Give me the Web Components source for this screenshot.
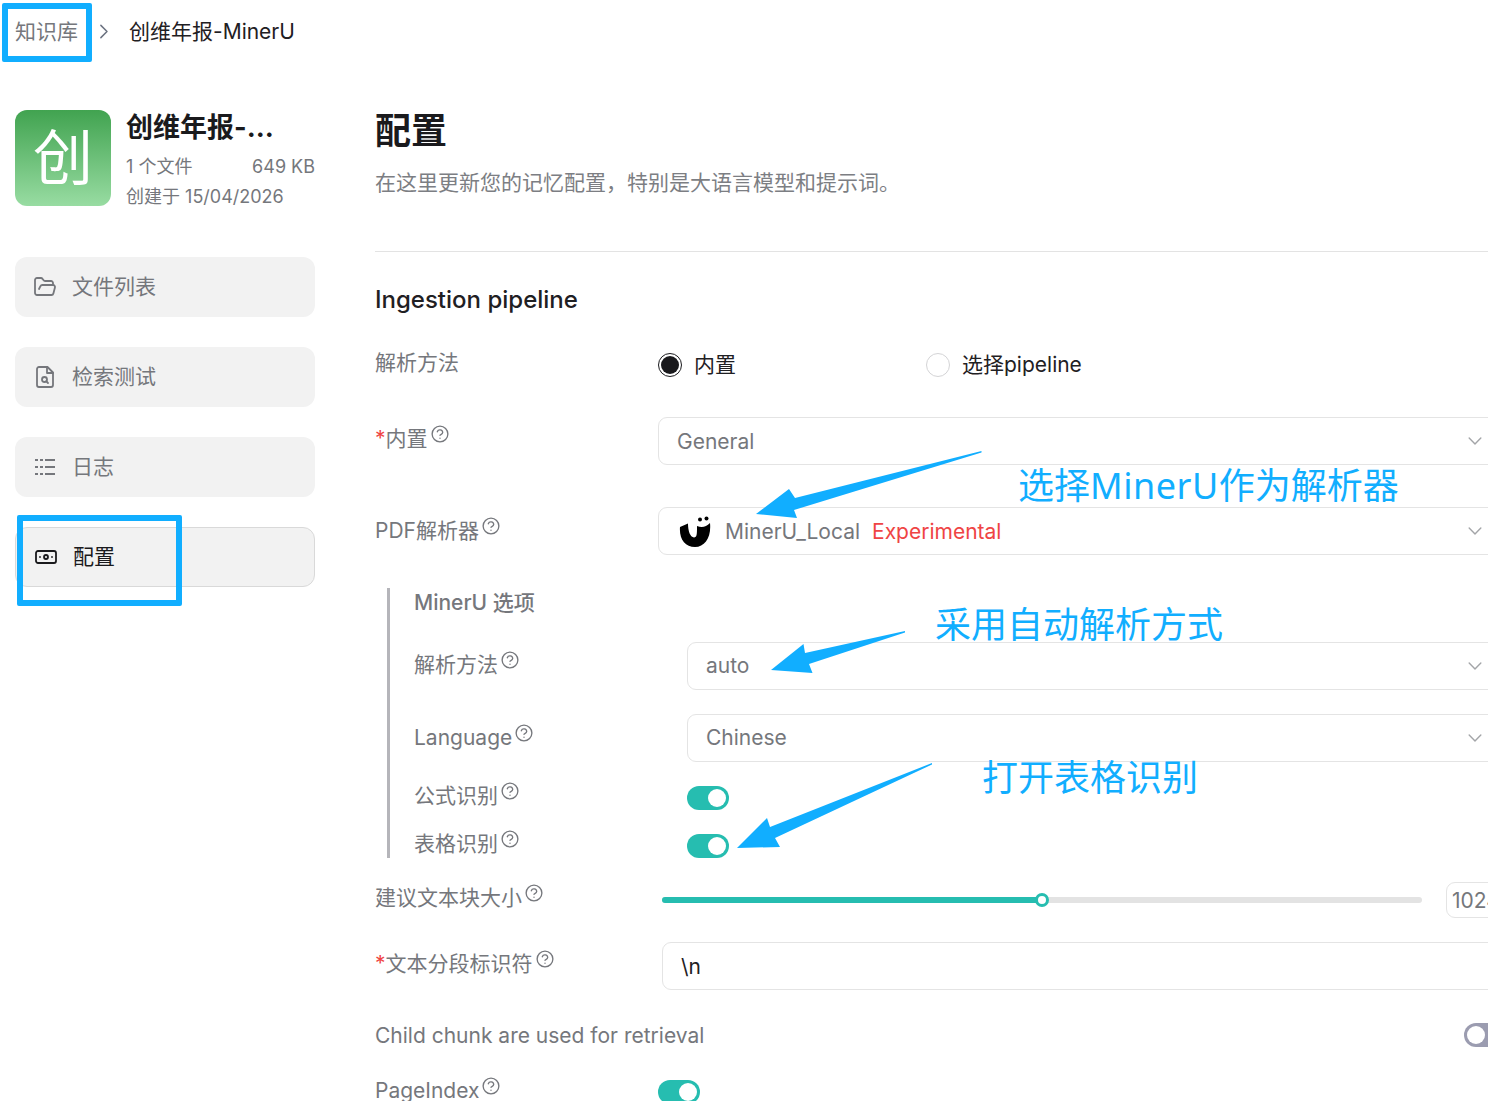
<!DOCTYPE html>
<html lang="zh">
<head>
<meta charset="utf-8">
<title>配置</title>
<style>
  html, body { margin: 0; height: 1101px; overflow: hidden; background: #fff; }
  body { font-family: Inter, "Noto Sans CJK SC", sans-serif; font-size: 21px; color: #75777c; position: relative; }
</style>
</head>
<body>
<kb-breadcrumb></kb-breadcrumb>
<kb-layout>
  <kb-sidebar slot="side"></kb-sidebar>

  <config-form slot="main">
    <form-row style="--row-h:48px;--gap-top:23px;--label-top:6px">
      <span slot="label">解析方法</span>
      <radio-choice checked style="width:268px">内置</radio-choice>
      <radio-choice>选择pipeline</radio-choice>
    </form-row>

    <form-row style="--row-h:48px;--gap-top:28px;--label-top:6px">
      <span slot="label"><req-mark></req-mark>内置<help-icon></help-icon></span>
      <select-box>General</select-box>
    </form-row>

    <form-row style="--row-h:48px;--gap-top:42px;--label-top:8px">
      <span slot="label">PDF解析器<help-icon></help-icon></span>
      <select-box>
        <mineru-logo></mineru-logo>
        <span style="margin-left:14px">MinerU_Local</span>
        <span style="margin-left:12px;color:#ef4444">Experimental</span>
      </select-box>
    </form-row>

    <sub-panel heading="MinerU 选项">
      <form-row style="--row-h:48px;--gap-top:26px;--label-top:7px;--label-w:273px">
        <span slot="label">解析方法<help-icon></help-icon></span>
        <select-box style="--val-shift:2px">auto</select-box>
      </form-row>
      <form-row style="--row-h:48px;--gap-top:24px;--label-top:8px;--label-w:273px">
        <span slot="label">Language<help-icon></help-icon></span>
        <select-box style="--val-shift:2px">Chinese</select-box>
      </form-row>
      <form-row style="--row-h:24px;--gap-top:24px;--label-top:-6px;--label-w:273px">
        <span slot="label">公式识别<help-icon></help-icon></span>
        <toggle-switch on></toggle-switch>
      </form-row>
      <form-row style="--row-h:24px;--gap-top:24px;--label-top:-6px;--label-w:273px">
        <span slot="label">表格识别<help-icon></help-icon></span>
        <toggle-switch on></toggle-switch>
      </form-row>
    </sub-panel>

    <form-row style="--row-h:36px;--gap-top:24px;--label-top:0px;--label-w:287px">
      <span slot="label">建议文本块大小<help-icon></help-icon></span>
      <range-field value="1024" percent="50"></range-field>
    </form-row>

    <form-row style="--row-h:48px;--gap-top:24px;--label-top:6px;--label-w:287px">
      <span slot="label"><req-mark></req-mark>文本分段标识符<help-icon></help-icon></span>
      <select-box plain><span style="color:#1f2023">\n</span></select-box>
    </form-row>

    <form-row style="--row-h:24px;--gap-top:33px;--label-top:-3px;--label-w:1fr;--ctl-w:auto">
      <span slot="label">Child chunk are used for retrieval</span>
      <toggle-switch></toggle-switch>
    </form-row>

    <form-row style="--row-h:24px;--gap-top:33px;--label-top:-5px">
      <span slot="label">PageIndex<help-icon></help-icon></span>
      <toggle-switch on></toggle-switch>
    </form-row>
  </config-form>
</kb-layout>

<note-overlay></note-overlay>

<script>
// Shared base: markup + styles go straight in an open shadow root
class ShadowEl extends HTMLElement {
  constructor() {
    super();
    this.attachShadow({ mode: 'open' });
  }
  render(html) {
    this.shadowRoot.innerHTML = html;
  }
}

const svgIcon = (body, size = 24, color = 'currentColor', sw = 2) =>
  `<svg width="${size}" height="${size}" viewBox="0 0 24 24" fill="none" stroke="${color}" stroke-width="${sw}" stroke-linecap="round" stroke-linejoin="round">${body}</svg>`;

class KbBreadcrumb extends ShadowEl {
  connectedCallback() {
    this.render(`
      <style>
        :host { display: flex; align-items: center; height: 60px; padding-left: 15px; font-size: 21px; color: #75777c; }
        svg { margin: 2px 0 0 15px; }
        .current { margin-left: 15px; color: #1f2023; }
      </style>
      <span>知识库</span>
      ${svgIcon('<path d="m9 5 7 7-7 7"/>', 21, '#6b7280', 1.7)}
      <span class="current">创维年报-MinerU</span>
    `);
  }
}

class KbLayout extends ShadowEl {
  connectedCallback() {
    this.render(`
      <style>
        :host { display: grid; grid-template-columns: 300px 1131px; column-gap: 60px; margin-top: 47px; padding-left: 15px; }
      </style>
      <slot name="side"></slot>
      <slot name="main"></slot>
    `);
  }
}

class KbSidebar extends ShadowEl {
  connectedCallback() {
    this.render(`
      <style>
        :host { display: block; padding-top: 3px; }
        .head { display: flex; gap: 15px; height: 96px; margin-bottom: 51px; }
        .avatar { width: 96px; height: 96px; flex: none; border-radius: 12px; display: flex; align-items: center; justify-content: center;
          background: linear-gradient(180deg, #41a350, #98dca2); color: #fff; font-size: 60px; font-weight: 400; line-height: 1; }
        .info { flex: 1; min-width: 0; color: #75777c; font-size: 18px; line-height: 30px; }
        .name { font-size: 27px; line-height: 36px; font-weight: 700; color: #1a1a1d; margin-bottom: 6px; white-space: nowrap; }
        .meta { display: flex; justify-content: space-between; }
        nav { display: flex; flex-direction: column; gap: 30px; }
      </style>
      <div class="head">
        <div class="avatar">创</div>
        <div class="info">
          <div class="name">创维年报-…</div>
          <div class="meta"><span>1 个文件</span><span>649 KB</span></div>
          <div>创建于 15/04/2026</div>
        </div>
      </div>
      <nav>
        <nav-item icon="folder">文件列表</nav-item>
        <nav-item icon="search">检索测试</nav-item>
        <nav-item icon="list">日志</nav-item>
        <nav-item icon="note" active>配置</nav-item>
      </nav>
    `);
  }
}

const NAV_ICONS = {
  folder: '<path d="m6 14 1.45-2.9A2 2 0 0 1 9.24 10H20a2 2 0 0 1 1.94 2.5l-1.55 6a2 2 0 0 1-1.94 1.5H4a2 2 0 0 1-2-2V5c0-1.1.9-2 2-2h3.93a2 2 0 0 1 1.66.9l.82 1.2a2 2 0 0 0 1.66.9H18a2 2 0 0 1 2 2v2"/>',
  search: '<path d="M14.5 2H6a2 2 0 0 0-2 2v16a2 2 0 0 0 2 2h12a2 2 0 0 0 2-2V7.5L14.5 2z"/><path d="M14 2v6h6"/><circle cx="11.5" cy="14.5" r="2.5"/><path d="M13.25 16.25 15 18"/>',
  list: '<path stroke-linecap="butt" stroke-dasharray="3 2" d="M2 5h8M2 12h8M2 19h8"/><path stroke-linecap="butt" d="M12 5H22M12 12H22M12 19H22"/>',
  note: '<rect x="2" y="6" width="20" height="12" rx="2"/><circle cx="12" cy="12" r="2"/><path d="M6 12h.01M18 12h.01"/>'
};

class NavItem extends ShadowEl {
  connectedCallback() {
    const active = this.hasAttribute('active');
    this.render(`
      <style>
        :host { display: flex; align-items: center; gap: 15px; height: 60px; box-sizing: border-box; padding-left: 18px;
          background: #f2f2f2; border-radius: 12px; font-size: 21px; color: #75777c; }
        :host([active]) { color: #1a1a1d; border: 1px solid #d9d9d9; }
        svg { flex: none; }
        .txt { margin-bottom: 4px; }
      </style>
      ${svgIcon(NAV_ICONS[this.getAttribute('icon')], 24, active ? '#1a1a1d' : '#75777c', 1.8)}
      <span class="txt"><slot></slot></span>
    `);
  }
}

class ConfigForm extends ShadowEl {
  connectedCallback() {
    this.render(`
      <style>
        :host { display: block; }
        h1 { margin: 0; font-size: 36px; line-height: 48px; font-weight: 700; color: #1a1a1d; }
        p { margin: 13px 0 0; font-size: 21px; line-height: 30px; color: #7c7e83; }
        hr { margin: 53px 0 0; border: 0; border-top: 1px solid #e3e3e3; }
        h2 { margin: 30px 0 0; font-size: 24px; line-height: 36px; font-weight: 500; color: #1f2023; }
      </style>
      <h1>配置</h1>
      <p>在这里更新您的记忆配置，特别是大语言模型和提示词。</p>
      <hr>
      <h2>Ingestion pipeline</h2>
      <slot></slot>
    `);
  }
}

class FormRow extends ShadowEl {
  connectedCallback() {
    this.render(`
      <style>
        :host { display: grid; grid-template-columns: var(--label-w, 283px) var(--ctl-w, 1fr); height: var(--row-h, 48px); margin-top: var(--gap-top, 24px); align-items: start; }
        .label { margin-top: var(--label-top, 0); line-height: 30px; font-size: 21px; color: #75777c; white-space: nowrap; position: relative; top: 1px; }
        .control { display: flex; align-items: center; min-width: 0; height: var(--row-h, 48px); }
      </style>
      <div class="label"><slot name="label"></slot></div>
      <div class="control"><slot></slot></div>
    `);
  }
}

class SubPanel extends ShadowEl {
  connectedCallback() {
    this.render(`
      <style>
        :host { display: block; margin: 33px 0 0 12px; padding-left: 24px; border-left: 3px solid #b5b5ba; height: 270px; }
        .title { font-size: 21px; line-height: 28px; font-weight: 500; color: #75777c; position: relative; top: 1px; }
      </style>
      <div class="title">${this.getAttribute('heading')}</div>
      <slot></slot>
    `);
  }
}

class SelectBox extends ShadowEl {
  connectedCallback() {
    const chevron = this.hasAttribute('plain') ? '' :
      `<span class="chev">${svgIcon('<path d="m5 8.5 7 7 7-7"/>', 20, '#a3a5a8', 1.7)}</span>`;
    this.render(`
      <style>
        :host { display: flex; flex: 1; align-items: center; height: 48px; box-sizing: border-box; padding: 0 24px 0 18px;
          border: 1px solid #e4e4e4; border-radius: 9px; font-size: 21px; color: #75777c; background: #fff; white-space: nowrap; }
        .val { display: flex; align-items: center; flex: 1; padding-bottom: var(--val-shift, 0); }
        .chev { display: flex; margin-right: -4px; }
      </style>
      <div class="val"><slot></slot></div>
      ${chevron}
    `);
  }
}

class RadioChoice extends ShadowEl {
  connectedCallback() {
    this.render(`
      <style>
        :host { display: inline-flex; align-items: center; gap: 12px; font-size: 21px; color: #1f2023; flex: none; }
        .dot { width: 24px; height: 24px; box-sizing: border-box; border-radius: 50%; border: 1px solid #d4d4d6; flex: none; background: #fff; }
        :host([checked]) .dot { border: 1.5px solid #1a1a1d; padding: 2px; background: #1a1a1d content-box; }
        .txt { margin-bottom: 4px; }
      </style>
      <span class="dot"></span><span class="txt"><slot></slot></span>
    `);
  }
}

class ToggleSwitch extends ShadowEl {
  connectedCallback() {
    this.render(`
      <style>
        :host { display: flex; align-items: center; justify-content: flex-start; width: 42px; height: 24px; box-sizing: border-box; padding: 3px;
          border-radius: 12px; background: #9b9cb0; flex: none; }
        :host([on]) { background: #26bdb0; justify-content: flex-end; }
        i { display: block; width: 18px; height: 18px; border-radius: 50%; background: #fff; }
      </style>
      <i></i>
    `);
  }
}

class RangeField extends ShadowEl {
  connectedCallback() {
    const pct = this.getAttribute('percent');
    this.render(`
      <style>
        :host { display: flex; flex: 1; align-items: center; gap: 24px; }
        .track { position: relative; width: 760px; height: 6px; border-radius: 3px; background: #e3e3e3; flex: none; }
        .fill { width: ${pct}%; height: 100%; border-radius: 3px; background: #26bdb0; }
        .thumb { position: absolute; left: ${pct}%; top: 50%; width: 14px; height: 14px; box-sizing: border-box; margin: -7px 0 0 -7px;
          border: 3px solid #26bdb0; border-radius: 50%; background: #fff; }
        .num { flex: 1; height: 36px; box-sizing: border-box; padding-left: 5px; border: 1px solid #e4e4e4; border-radius: 9px;
          line-height: 36px; font-size: 21px; color: #75777c; overflow: hidden; }
      </style>
      <div class="track"><div class="fill"></div><div class="thumb"></div></div>
      <div class="num">${this.getAttribute('value')}</div>
    `);
  }
}

class HelpIcon extends ShadowEl {
  connectedCallback() {
    this.render(`
      <style>
        :host { display: inline-block; width: 18px; height: 18px; margin-left: 3px; position: relative; top: -6px; vertical-align: middle; line-height: 0; }
      </style>
      ${svgIcon('<circle cx="12" cy="12" r="10.5"/><path d="M8.4 9a3.7 3.7 0 0 1 7.2 1c0 2.3-3.6 3.2-3.6 3.6"/><path d="M12 17.6h.01"/>', 18, '#75777c', 1.8)}
    `);
  }
}

class ReqMark extends ShadowEl {
  connectedCallback() {
    this.render(`<style>:host { color: #ef4444; }</style>*`);
  }
}

class MineruLogo extends ShadowEl {
  connectedCallback() {
    this.render(`
      <style>:host { display: flex; width: 32px; height: 31px; margin-left: 2px; }</style>
      <svg width="32" height="31" viewBox="0 0 32 31">
        <path fill="#000" d="M1 11 L9 7.5 C9 15 11 21 15 21.5 C18 21.5 18 18 18 10 C23 12 27 11 31 7 C32.5 21 26 31 16 31 C6 31 0 23 1 11 Z"/>
        <circle cx="21" cy="3.5" r="2"/><circle cx="27.5" cy="2.5" r="2"/>
      </svg>
    `);
  }
}

// Hand drawn review marks sitting on top of the screenshot
class NoteOverlay extends ShadowEl {
  connectedCallback() {
    this.render(`
      <style>
        :host { position: absolute; inset: 0; pointer-events: none; display: block; }
        svg { position: absolute; left: 0; top: 0; }
        .box { position: absolute; box-sizing: border-box; border: 6px solid #11aeff; border-radius: 2px; }
        .note { position: absolute; transform: translateY(-50%); font-family: "Noto Sans", "Noto Sans CJK SC", sans-serif; font-size: 36px; line-height: 1.2; font-weight: 400; color: #11aeff; white-space: nowrap; }
        .wide { letter-spacing: .5px; }
      </style>
      <div class="box" style="left:2px;top:3px;width:90px;height:59px"></div>
      <div class="box" style="left:17px;top:515px;width:165px;height:91px"></div>
      <svg width="1488" height="1101" fill="#11aeff">
        <polygon points="981.5,451 981.5,452.5 794,510 797,518 756,514 789,489 795,498"/>
        <polygon points="905,631 905,632.5 809,664 812.5,673 771,670 803.5,644 805,653"/>
        <polygon points="932,763 932,764.5 775,838 780,847 737,848 767,818 770,827"/>
      </svg>
      <span class="note" style="left:1018px;top:486px">选择<span class="wide">MinerU</span>作为解析器</span>
      <span class="note" style="left:935px;top:625px">采用自动解析方式</span>
      <span class="note" style="left:982px;top:778px">打开表格识别</span>
    `);
  }
}

customElements.define('kb-breadcrumb', KbBreadcrumb);
customElements.define('kb-layout', KbLayout);
customElements.define('kb-sidebar', KbSidebar);
customElements.define('nav-item', NavItem);
customElements.define('config-form', ConfigForm);
customElements.define('form-row', FormRow);
customElements.define('sub-panel', SubPanel);
customElements.define('select-box', SelectBox);
customElements.define('radio-choice', RadioChoice);
customElements.define('toggle-switch', ToggleSwitch);
customElements.define('range-field', RangeField);
customElements.define('help-icon', HelpIcon);
customElements.define('req-mark', ReqMark);
customElements.define('mineru-logo', MineruLogo);
customElements.define('note-overlay', NoteOverlay);
</script>
</body>
</html>
